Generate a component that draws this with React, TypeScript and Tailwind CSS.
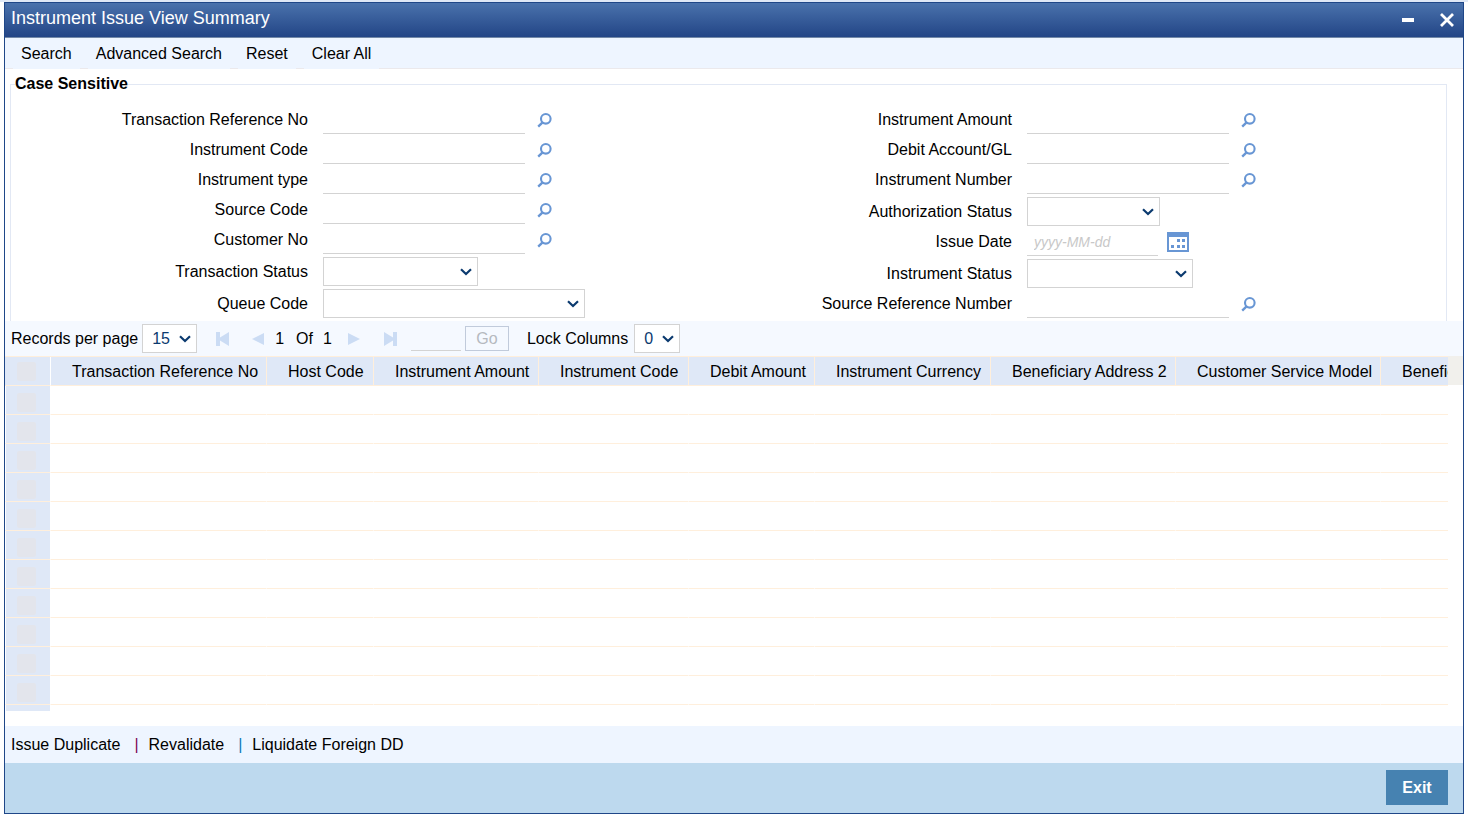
import type { ReactNode } from "react";

type FieldSpec = {
  id: string;
  label: string;
  kind: "lookup" | "select" | "date";
  width?: string;
};

const leftFields: FieldSpec[] = [
  { id: "txn-ref", label: "Transaction Reference No", kind: "lookup" },
  { id: "instr-code", label: "Instrument Code", kind: "lookup" },
  { id: "instr-type", label: "Instrument type", kind: "lookup" },
  { id: "source-code", label: "Source Code", kind: "lookup" },
  { id: "customer-no", label: "Customer No", kind: "lookup" },
  { id: "txn-status", label: "Transaction Status", kind: "select", width: "w-[155px]" },
  { id: "queue-code", label: "Queue Code", kind: "select", width: "w-[262px]" },
];

const rightFields: FieldSpec[] = [
  { id: "instr-amount", label: "Instrument Amount", kind: "lookup" },
  { id: "debit-account", label: "Debit Account/GL", kind: "lookup" },
  { id: "instr-number", label: "Instrument Number", kind: "lookup" },
  { id: "auth-status", label: "Authorization Status", kind: "select", width: "w-[133px]" },
  { id: "issue-date", label: "Issue Date", kind: "date" },
  { id: "instr-status", label: "Instrument Status", kind: "select", width: "w-[166px]" },
  { id: "source-ref", label: "Source Reference Number", kind: "lookup" },
];

const columns = [
  { title: "Transaction Reference No", width: "w-[216px]" },
  { title: "Host Code", width: "w-[107px]" },
  { title: "Instrument Amount", width: "w-[165px]" },
  { title: "Instrument Code", width: "w-[150px]" },
  { title: "Debit Amount", width: "w-[126px]" },
  { title: "Instrument Currency", width: "w-[176px]" },
  { title: "Beneficiary Address 2", width: "w-[185px]" },
  { title: "Customer Service Model", width: "w-[205px]" },
  { title: "Beneficiary", width: "w-[185px]" },
];

const rows = Array.from({ length: 12 }, (_, i) => i + 1);

function SearchIcon() {
  return (
    <svg width="16" height="16" viewBox="0 0 16 16" fill="none" stroke="#6896d4">
      <circle cx="8.8" cy="6.8" r="4.8" strokeWidth="2.1" />
      <path d="M5.600 10.400 1.200 14.600" strokeWidth="2.4" />
    </svg>
  );
}

function CalendarIcon() {
  return (
    <svg width="22" height="20" viewBox="0 0 22 20" fill="#6896d4">
      <path d="M0 0h22v20H0z" />
      <path d="M2 5h18v13H2z" fill="#fff" />
      <path d="M10 7h3v3h-3zM15 7h3v3h-3zM4 13h3v3H4zM10 13h3v3h-3zM15 13h3v3h-3z" />
    </svg>
  );
}

function Select({ id, width, children, pad }: { id: string; width: string; children?: ReactNode; pad: string }) {
  return (
    <span className={`relative inline-flex h-[29px] ${width}`}>
      <select
        id={id}
        className={`h-full w-full appearance-none border border-[#d3d3d3] bg-white ${pad} text-[#0b3a6f] outline-none`}
      >
        {children}
      </select>
      <svg
        className="pointer-events-none absolute top-[11px] right-[6px]"
        width="12"
        height="8"
        viewBox="0 0 12 8"
        fill="none"
        stroke="#0b3a6f"
        strokeWidth="2.2"
      >
        <path d="M1 1.2 6 6l5-4.8" />
      </svg>
    </span>
  );
}

function Field({ id, label, kind, width }: FieldSpec) {
  const isSelect = kind === "select";
  return (
    <div className={`flex items-end gap-[15px] ${isSelect ? "h-8" : "h-[30px]"}`}>
      <label htmlFor={id} className="flex h-7 w-[297px] items-center justify-end whitespace-nowrap">
        {label}
      </label>
      {kind === "lookup" && (
        <div className="flex h-7 gap-3">
          <input id={id} type="text" className="w-[202px] border-b border-[#d3d3d3] bg-transparent px-2 outline-none" />
          <button type="button" aria-label={`Look up ${label}`} className="flex items-center">
            <SearchIcon />
          </button>
        </div>
      )}
      {kind === "date" && (
        <div className="flex h-7 gap-[9px]">
          <input
            id={id}
            type="text"
            placeholder="yyyy-MM-dd"
            className="w-[131px] border-b border-[#d3d3d3] bg-transparent px-[7px] text-sm italic outline-none placeholder:text-[#c8c8c8]"
          />
          <button type="button" aria-label="Open calendar" className="flex items-center">
            <CalendarIcon />
          </button>
        </div>
      )}
      {isSelect && <Select id={id} width={width ?? "w-40"} pad="px-2" />}
    </div>
  );
}

function PagerButton({ label, path }: { label: string; path: string }) {
  return (
    <button type="button" disabled aria-label={label}>
      <svg width="14" height="14" viewBox="0 0 14 14" fill="#cbdcf4">
        <path d={path} />
      </svg>
    </button>
  );
}

function RowCheck({ id }: { id: string }) {
  return (
    <input
      id={id}
      type="checkbox"
      disabled
      aria-label={id}
      className="ml-3 block h-[19px] w-[19px] appearance-none rounded-[2px] bg-[#e3e5ec]"
    />
  );
}

export default function App() {
  return (
    <div
      className="bg-white text-base leading-5 text-black"
      style={{ fontFamily: '"Liberation Sans", Arial, sans-serif' }}
    >
      <div className="h-0.5 bg-[#dfe8f6]" />
      <div className="mx-1 border border-[#1f4788]">
        <header className="flex h-[35px] items-center justify-between border-b border-[#7389a8] bg-linear-to-b from-[#4a72ac] to-[#234586] pr-2 pb-1 pl-1.5 text-white">
          <h1 className="text-lg">Instrument Issue View Summary</h1>
          <div className="flex items-center gap-6 pt-1">
            <button type="button" aria-label="Minimize">
              <svg width="14" height="14" viewBox="0 0 14 14" fill="#fff">
                <path d="M1 5h12v4H1z" />
              </svg>
            </button>
            <button type="button" aria-label="Close">
              <svg width="16" height="16" viewBox="0 0 16 16" stroke="#fff" strokeWidth="2.8">
                <path d="M2 2l12 12M14 2L2 14" />
              </svg>
            </button>
          </div>
        </header>

        <nav className="flex h-[31px] gap-2 border-b border-[#ebe9ec] bg-[#eef5ff] pl-2">
          {["Search", "Advanced Search", "Reset", "Clear All"].map((item) => (
            <button key={item} type="button" className="-mb-px bg-[#eef5ff] px-2">
              {item}
            </button>
          ))}
        </nav>

        <section className="pr-4 pl-[5px]">
          <fieldset className="border border-b-0 border-[#e2e8f4] pt-1 pb-[3px]">
            <legend className="ml-1 pt-[3px] pb-1 text-base font-bold">Case Sensitive</legend>
            <div className="grid grid-cols-2 pr-[27px]">
              <div>
                {leftFields.map((f) => (
                  <Field key={f.id} {...f} />
                ))}
              </div>
              <div>
                {rightFields.map((f) => (
                  <Field key={f.id} {...f} />
                ))}
              </div>
            </div>
          </fieldset>
        </section>

        <div className="flex h-[35px] items-center bg-[#f5f9ff] pl-1.5">
          <label htmlFor="page-size" className="mr-1 whitespace-nowrap">
            Records per page
          </label>
          <Select id="page-size" width="w-[55px]" pad="pl-[9px]">
            <option>15</option>
          </Select>
          <div className="ml-[18px] flex items-center gap-[22px]">
            <PagerButton label="First page" path="M1 0h4v5.500L14 0v14L5 8.500V14H1z" />
            <PagerButton label="Previous page" path="M13 1v12L1 7z" />
          </div>
          <span className="ml-[10px] mr-3">1</span>
          <span>Of</span>
          <span className="mx-[10px]">1</span>
          <div className="ml-1.5 flex items-center gap-[22px]">
            <PagerButton label="Next page" path="M0 1v12l12-6z" />
            <PagerButton label="Last page" path="M13 0H9v5.500L0 0v14l9-5.500V14h4z" />
          </div>
          <input
            type="text"
            disabled
            aria-label="Go to page"
            className="ml-[13px] h-6 w-[50px] border-b border-[#d3d3d3] bg-transparent"
          />
          <button type="button" disabled className="ml-1 h-[25px] w-11 border border-[#c1cbdb] text-[#b5b9c0]">
            Go
          </button>
          <label htmlFor="lock-columns" className="mr-1.5 ml-[18px] whitespace-nowrap">
            Lock Columns
          </label>
          <Select id="lock-columns" width="w-[46px]" pad="pl-[9px]">
            <option>0</option>
          </Select>
        </div>

        <div className="flex">
          <div className="h-[355px] min-w-0 flex-1 overflow-hidden">
            <table className="w-max table-fixed border-separate border-spacing-0 border-t border-[#ffefdc]">
              <thead>
                <tr className="h-[29px] bg-[#dfe8f7]">
                  <th className="w-[46px] border-r border-b border-r-white border-b-[#ffefdc] p-0">
                    <RowCheck id="Select all" />
                  </th>
                  {columns.map((c) => (
                    <th
                      key={c.title}
                      className={`border-r border-b border-[#ffefdc] pt-px pr-0 pb-0 pl-[21px] text-left font-normal whitespace-nowrap ${c.width}`}
                    >
                      {c.title}
                    </th>
                  ))}
                </tr>
              </thead>
              <tbody>
                {rows.map((r) => (
                  <tr key={r} className="h-[29px]">
                    <td className="border-r border-b border-l border-r-white border-b-[#ffefdc] border-l-white bg-[#dfe8f7] p-0">
                      {r < 12 && (
                        <div className="-ml-px pt-1">
                          <RowCheck id={`Select row ${r}`} />
                        </div>
                      )}
                    </td>
                    {columns.map((c) => (
                      <td key={c.title} className="border-r border-b border-r-white border-b-[#ffefdc] p-0" />
                    ))}
                  </tr>
                ))}
              </tbody>
            </table>
          </div>
          <div className="h-[29px] w-[15px] bg-[#f1f0ec]" />
        </div>

        <footer>
          <div className="mt-[15px] flex h-[37px] items-center gap-[10px] bg-[#eef5ff] pl-1.5">
            <button type="button">Issue Duplicate</button>
            <span className="pl-1 text-[#7d0552]">|</span>
            <button type="button">Revalidate</button>
            <span className="pl-1 text-[#0b78b8]">|</span>
            <button type="button">Liquidate Foreign DD</button>
          </div>
          <div className="flex h-[50px] items-start justify-end bg-[#bdd9ee] pt-[7px] pr-[15px]">
            <button type="button" className="h-[35px] w-[62px] bg-[#4682b1] font-bold text-white">
              Exit
            </button>
          </div>
        </footer>
      </div>
    </div>
  );
}
